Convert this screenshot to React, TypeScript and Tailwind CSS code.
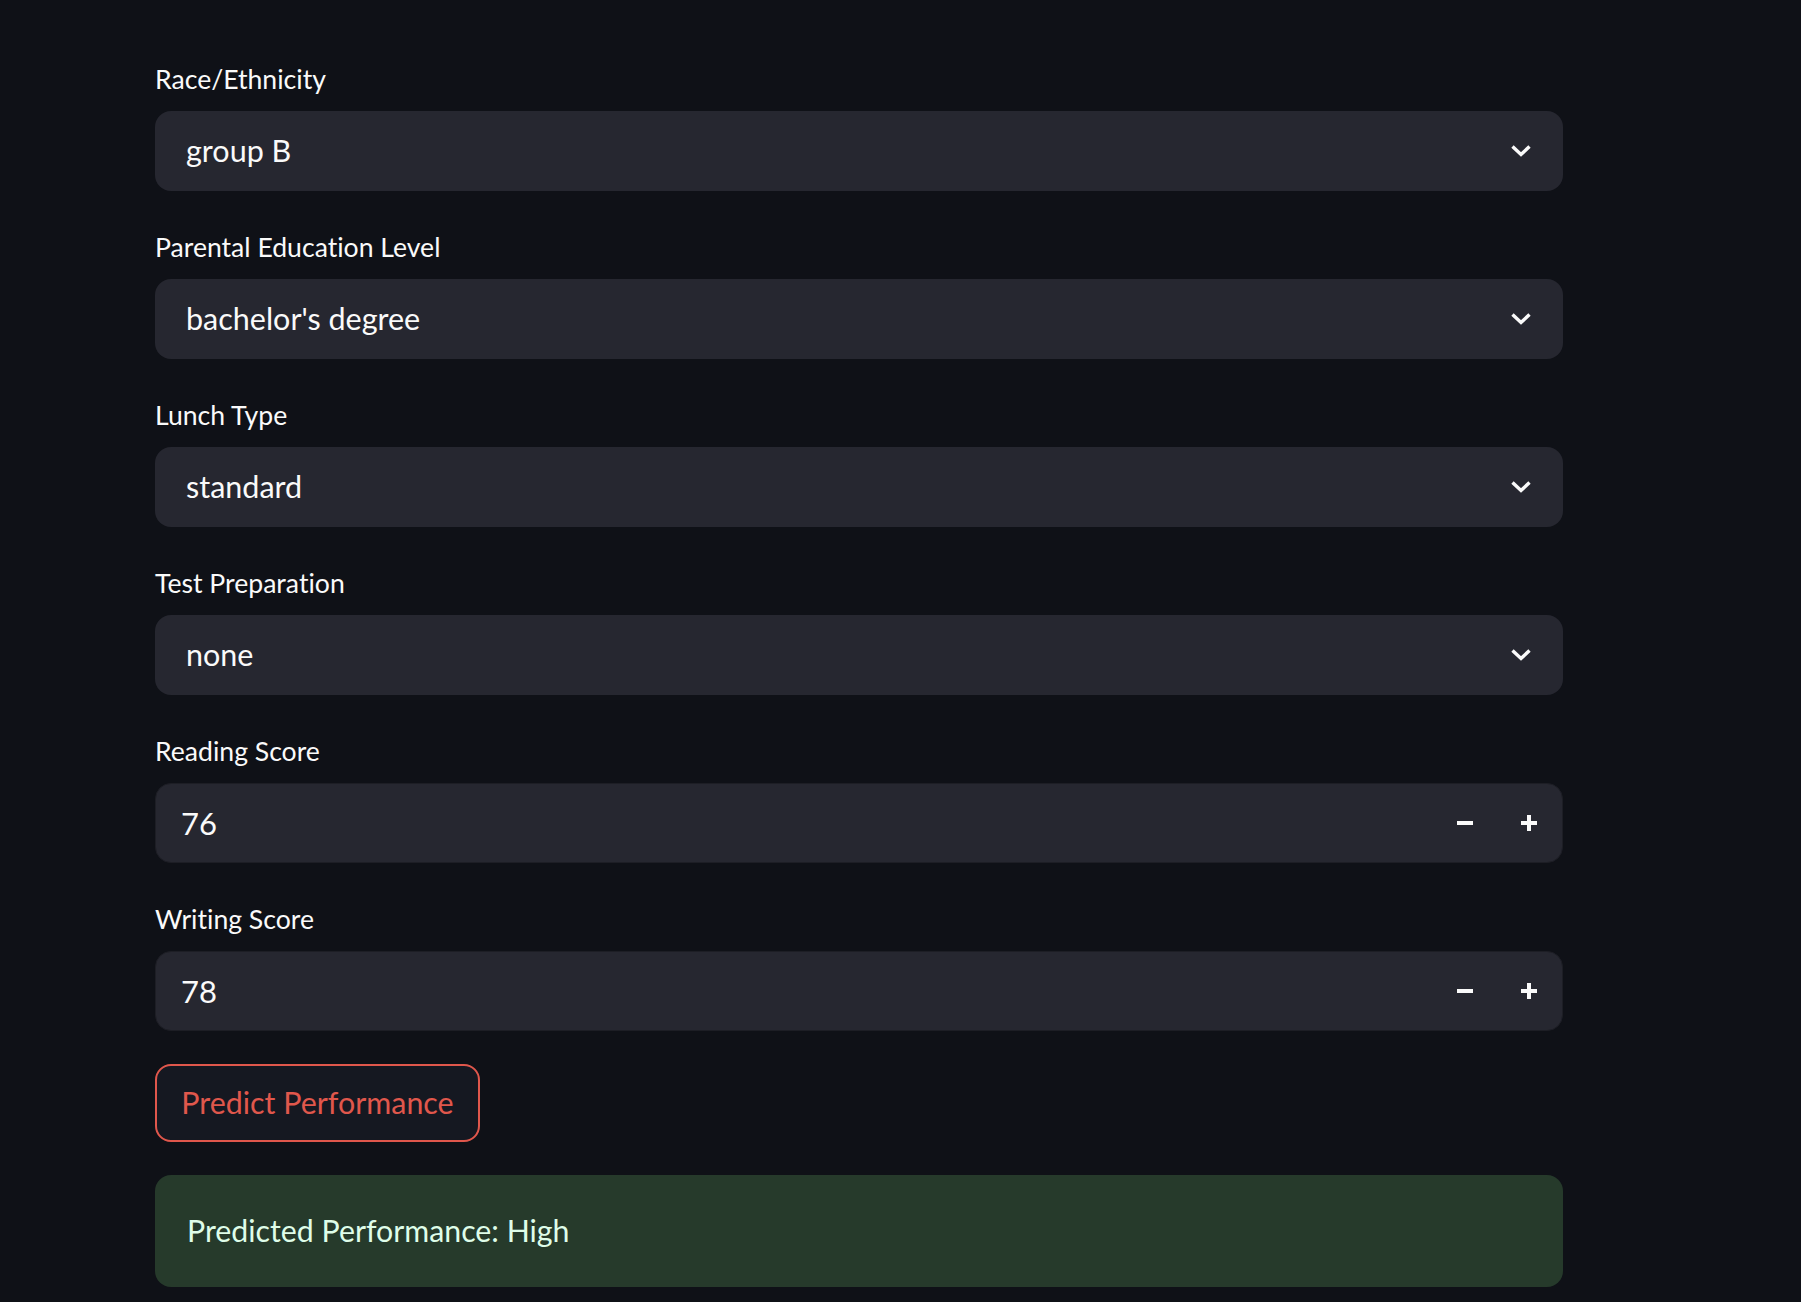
import React from "react";

const FONT = { fontFamily: "Lato, 'Noto Sans', sans-serif" };

const SELECTS = [
  { label: "Race/Ethnicity", value: "group B" },
  { label: "Parental Education Level", value: "bachelor's degree" },
  { label: "Lunch Type", value: "standard" },
  { label: "Test Preparation", value: "none" },
];

const NUMBERS = [
  { label: "Reading Score", value: 76 },
  { label: "Writing Score", value: 78 },
];

const Chevron = () => (
  <svg width="22" height="14" viewBox="0 0 22 14" fill="none">
    <polyline points="2.5,2.5 11,10.5 19.5,2.5" stroke="#fafafa" strokeWidth="3.4" strokeLinejoin="miter" />
  </svg>
);

const Minus = () => (
  <svg width="16" height="16" viewBox="0 0 16 16">
    <rect x="0" y="6" width="16" height="4" fill="#fafafa" />
  </svg>
);

const Plus = () => (
  <svg width="16" height="16" viewBox="0 0 16 16">
    <rect x="0" y="6" width="16" height="4" fill="#fafafa" />
    <rect x="6" y="0" width="4" height="16" fill="#fafafa" />
  </svg>
);

const Label = ({ text }: { text: string }) => (
  <div className="h-[48px] leading-[48px] mb-[8px] text-[26.6px] text-[#fafafa] [font-variant-ligatures:none]">{text}</div>
);

const SelectField = ({ label, value }: { label: string; value: string }) => (
  <div>
    <Label text={label} />
    <div className="h-[80px] rounded-[16px] bg-[#262730] flex items-center justify-between pl-[31px] pr-[31px]">
      <span className="text-[30.5px] text-[#fafafa]">{value}</span>
      <Chevron />
    </div>
  </div>
);

const NumberField = ({ label, value }: { label: string; value: number }) => (
  <div>
    <Label text={label} />
    <div className="h-[80px] rounded-[16px] bg-[#262730] border border-[#1d1e25] flex items-center pl-[25px] pr-[1px]">
      <span className="flex-1 text-[31px] text-[#fafafa]">{value}</span>
      <button className="w-[64px] h-full flex items-center justify-center">
        <Minus />
      </button>
      <button className="w-[64px] h-full flex items-center justify-center">
        <Plus />
      </button>
    </div>
  </div>
);

export default function App() {
  return (
    <div className="min-h-screen bg-[#0f1117] pt-[55px] pl-[155px]" style={FONT}>
      <div className="w-[1408px] flex flex-col gap-[32px]">
        {SELECTS.map((s) => (
          <SelectField key={s.label} label={s.label} value={s.value} />
        ))}
        {NUMBERS.map((n) => (
          <NumberField key={n.label} label={n.label} value={n.value} />
        ))}
      </div>
      <div className="w-[1408px] mt-[33px]">
        <button className="w-[325px] h-[78px] rounded-[16px] border-2 border-[#e0574c] bg-[#151821] text-[#e0574c] text-[30.4px] flex items-center justify-center">
          Predict Performance
        </button>
        <div className="mt-[33px] h-[112px] rounded-[16px] bg-[#263a2b] flex items-center pl-[32px] text-[30.3px] text-[#dffde9]">
          Predicted Performance: High
        </div>
      </div>
    </div>
  );
}
